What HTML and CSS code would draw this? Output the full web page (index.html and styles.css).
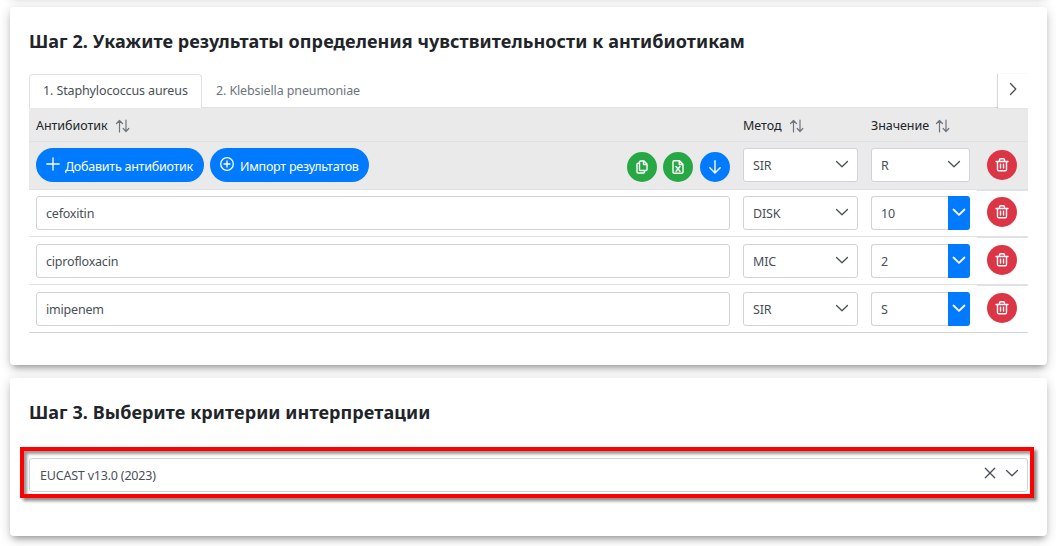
FILE: index.html
```html
<!DOCTYPE html>
<html lang="ru">
<head>
<meta charset="utf-8">
<title>Интерпретация результатов</title>
<link rel="stylesheet" href="styles.css">
</head>
<body>
<svg width="0" height="0" class="defs">
  <symbol id="chev" viewBox="0 0 14 14"><path d="M1.500 4.500 7 9.800l5.500-5.300"/></symbol>
  <symbol id="sort" viewBox="0 0 14 14"><path d="M4 13V1.500M1 4.500l3-3 3 3M10.500 1v11.500M7.700 9.500l2.800 3 2.800-3"/></symbol>
  <symbol id="plus" viewBox="0 0 14 14"><path d="M7 .8v12.400M.8 7h12.400"/></symbol>
  <symbol id="pluscircle" viewBox="0 0 14 14"><circle cx="7" cy="7" r="6.300"/><path d="M7 4v6M4 7h6"/></symbol>
  <symbol id="copy" viewBox="0 0 14 14"><path d="M5.500 1h3.500l3 3v5.500a1 1 0 0 1-1 1h-5.500a1 1 0 0 1-1-1V2a1 1 0 0 1 1-1zM8.500 1v3.500h3.500M4.500 3.200h-1.500a1 1 0 0 0-1 1V12a1 1 0 0 0 1 1h5.500a1 1 0 0 0 1-1v-1.500"/></symbol>
  <symbol id="excel" viewBox="0 0 14 14"><path d="M3 .8h5.500l3.500 3.500V12a1.200 1.200 0 0 1-1.200 1.200H3.200A1.200 1.200 0 0 1 2 12V2A1.200 1.200 0 0 1 3 .8zM8.200 1v3.500H12M5 6.500l4 4.700M9 6.500l-4 4.700"/></symbol>
  <symbol id="down" viewBox="0 0 14 14"><path d="M7 .8v12M1.800 7.800 7 13l5.200-5.200"/></symbol>
  <symbol id="trash" viewBox="0 0 14 14"><path d="M1 3.500h12M2.500 3.500V11.500a1.200 1.200 0 0 0 1.200 1.200h6.600a1.200 1.200 0 0 0 1.200-1.200V3.500M4.500 3.300V1.800a1 1 0 0 1 1-1h3a1 1 0 0 1 1 1v1.500M5.500 6.300v3.700M8.500 6.300v3.700"/></symbol>
  <symbol id="close" viewBox="0 0 14 14"><path d="m2.300 2.300 9.400 9.400M11.700 2.300 2.300 11.700"/></symbol>
</svg>
<main class="page">
  <section class="card card-prev"></section>

  <section class="card card-step2">
    <h2>Шаг 2. Укажите результаты определения чувствительности к антибиотикам</h2>
    <nav class="tabs">
      <a class="tab active">1. Staphylococcus aureus</a>
      <a class="tab">2. Klebsiella pneumoniae</a>
      <button class="tab-next"><svg class="icon"><use href="#chev"/></svg></button>
    </nav>
    <div class="table">
      <div class="row head">
        <div class="cell">Антибиотик<svg class="icon"><use href="#sort"/></svg></div>
        <div class="cell">Метод<svg class="icon"><use href="#sort"/></svg></div>
        <div class="cell value">Значение<svg class="icon"><use href="#sort"/></svg></div>
        <div class="cell"></div>
      </div>
      <div class="row tools">
        <div class="cell">
          <button class="pill add"><svg class="icon"><use href="#plus"/></svg><span>Добавить антибиотик</span></button>
          <button class="pill import"><svg class="icon"><use href="#pluscircle"/></svg><span>Импорт результатов</span></button>
          <div class="round-group">
            <button class="round green"><svg class="icon"><use href="#copy"/></svg></button>
            <button class="round green"><svg class="icon"><use href="#excel"/></svg></button>
            <button class="round blue"><svg class="icon"><use href="#down"/></svg></button>
          </div>
        </div>
        <div class="cell"><div class="field"><span>SIR</span><svg class="icon"><use href="#chev"/></svg></div></div>
        <div class="cell"><div class="field"><span>R</span><svg class="icon"><use href="#chev"/></svg></div></div>
        <div class="cell"><button class="round red"><svg class="icon"><use href="#trash"/></svg></button></div>
      </div>
      <div class="row first">
        <div class="cell"><div class="field"><span>cefoxitin</span></div></div>
        <div class="cell"><div class="field"><span>DISK</span><svg class="icon"><use href="#chev"/></svg></div></div>
        <div class="cell"><div class="field combo"><span>10</span></div><button class="drop"><svg class="icon"><use href="#chev"/></svg></button></div>
        <div class="cell"><button class="round red"><svg class="icon"><use href="#trash"/></svg></button></div>
      </div>
      <div class="row">
        <div class="cell"><div class="field"><span>ciprofloxacin</span></div></div>
        <div class="cell"><div class="field"><span>MIC</span><svg class="icon"><use href="#chev"/></svg></div></div>
        <div class="cell"><div class="field combo"><span>2</span></div><button class="drop"><svg class="icon"><use href="#chev"/></svg></button></div>
        <div class="cell"><button class="round red"><svg class="icon"><use href="#trash"/></svg></button></div>
      </div>
      <div class="row last">
        <div class="cell"><div class="field"><span>imipenem</span></div></div>
        <div class="cell"><div class="field"><span>SIR</span><svg class="icon"><use href="#chev"/></svg></div></div>
        <div class="cell"><div class="field combo"><span>S</span></div><button class="drop"><svg class="icon"><use href="#chev"/></svg></button></div>
        <div class="cell"><button class="round red"><svg class="icon"><use href="#trash"/></svg></button></div>
      </div>
    </div>
  </section>

  <section class="card card-step3">
    <h2>Шаг 3. Выберите критерии интерпретации</h2>
    <div class="highlight">
      <div class="field criteria"><span>EUCAST v13.0 (2023)</span><svg class="icon"><use href="#close"/></svg><svg class="icon"><use href="#chev"/></svg></div>
    </div>
  </section>
</main>
</body>
</html>
```
FILE: styles.css
```css
* { box-sizing: border-box; }
body {
  margin: 0;
  height: 546px;
  overflow: hidden;
  background: #fff;
  color: #212529;
  font: 12.5px/20px "Noto Sans", "Open Sans", sans-serif;
}
.defs { position: absolute; }
.page { padding: 0 9px 0 10px; }
button { border: 0; padding: 0; font: inherit; color: #fff; display: flex; align-items: center; justify-content: center; }
.icon { width: 14px; height: 14px; flex: none; fill: none; stroke: currentColor; stroke-width: 1.3; stroke-linecap: round; stroke-linejoin: round; }

.card {
  background: #fff;
  border-radius: 4px;
  padding: 0 19px;
  box-shadow: 0 5px 6px -3px rgba(0,0,0,.3), 0 3px 12px 0 rgba(0,0,0,.2);
}
.card-prev { height: 100px; margin-top: -106px; margin-bottom: 13px; }
.card-step2 { height: 358px; margin-bottom: 13px; padding-top: 21px; }
.card-step3 { height: 158px; padding: 21px 12px 0 10px; }
h2 { margin: 0; font-size: 18px; line-height: 27px; font-weight: 700; letter-spacing: .08px; }
.card-step3 h2 { padding-left: 9px; }

.tabs { display: flex; height: 34px; margin-top: 19px; border-bottom: 1px solid #dee2e6; letter-spacing: -.12px; }
.tab { height: 34px; padding: 6px 13px; border: 1px solid transparent; border-bottom: 0; color: #6c757d; white-space: nowrap; }
.tab.active { width: 173px; background: #fff; border-color: #dee2e6; border-radius: 4px 4px 0 0; color: #495057; }
.tab-next { width: 30px; height: 34px; margin-left: auto; padding-bottom: 4px; background: #fff; color: #495057; box-shadow: -1px 0 1px rgba(0,0,0,.14); }
.tab-next .icon { transform: rotate(-90deg); }

.row { display: grid; grid-template-columns: 707px 128px 113px 51px; height: 48px; border-bottom: 1px solid #dee2e6; }
.cell { display: flex; align-items: flex-start; padding: 7px 6px 0 7px; }
.cell:nth-child(3) { padding-right: 7px; }
.cell:nth-child(4) { padding: 8px 0 0 10px; box-shadow: 0 2px 0 #dee2e6; }
.row.head { height: 34px; background: #eaeaea; letter-spacing: -.05px; }
.head .cell { padding-top: 8px; box-shadow: none; }
.head .icon { margin: 3px 0 0 8px; color: #6c757d; width: 15px; height: 14px; stroke-width: 1.2; }
.head .value .icon { margin-left: 6px; }
.row.tools { background: #eaeaea; }
.tools .cell, .first .cell { padding-top: 6px; }
.tools .cell:last-child { padding-top: 8px; }
.row.first { height: 47px; }
.first .cell:last-child { padding-top: 7px; }
.row.last { border-color: #ced4da; }
.last .cell { box-shadow: none; }
.row.last .cell:last-child { box-shadow: none; }

.field { flex: 1; display: flex; height: 34px; padding: 7px 8px 0 9px; border: 1px solid #ced4da; border-radius: 3px; background: #fff; color: #495057; letter-spacing: -.2px; font-weight: 370; }
.field span { flex: 1; }
.field .icon { margin-top: 1px; }
.combo { border-radius: 3px 0 0 3px; border-right: 0; }
.drop { width: 22px; height: 34px; padding-bottom: 3px; background: #007bff; border-radius: 0 3px 3px 0; }
.drop .icon { stroke-width: 1.8; }

.pill { height: 34px; border-radius: 17px; background: #007bff; margin-right: 6px; letter-spacing: -.24px; justify-content: flex-start; }
.add { width: 168px; padding-left: 10px; }
.import { width: 159px; padding-left: 10px; }
.pill .icon { margin: 0 5px 2px 0; }
.import .icon { margin-right: 6px; }
.pill span { padding-top: 4px; white-space: nowrap; }
.round { width: 30px; height: 30px; border-radius: 50%; }
.round .icon { stroke-width: 1.4; }
.round-group { display: flex; gap: 6px; margin: 4px 0 0 auto; }
.blue { margin-left: 1px; background: #007bff; }
.green { background: #28a745; }
.red { background: #dc3545; }
.red .icon { margin-bottom: 1px; }

.highlight { height: 51px; width: 1014px; margin-top: 21px; padding: 7px 2px 0 5px; border: 4px solid #f00; box-shadow: 3px 3px 3px rgba(0,0,0,.45), inset 3px 3px 3px rgba(0,0,0,.4); }
.criteria { padding-left: 10px; }
.criteria .icon { margin: 0 0 0 8px; }
```
